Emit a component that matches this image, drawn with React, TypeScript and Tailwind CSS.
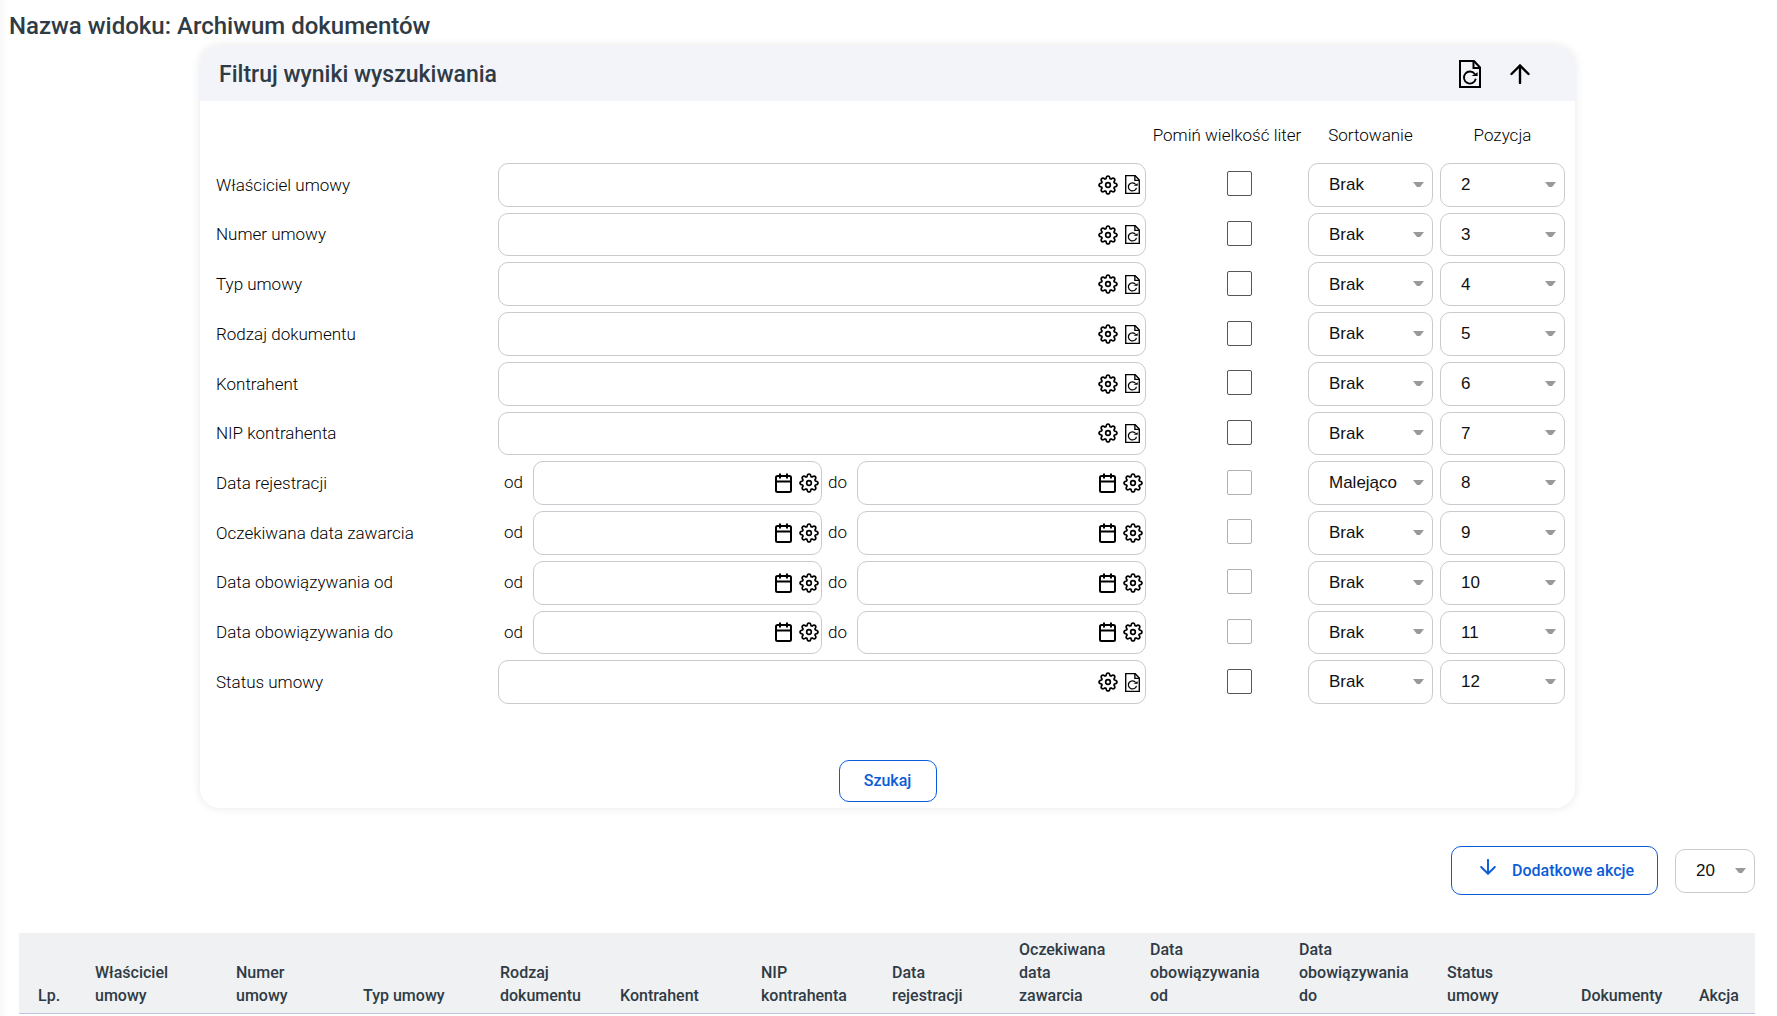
import { useState } from 'react';

interface FilterRow {
  id: string;
  label: string;
  range?: boolean;
  sort: string;
}

interface Column {
  title: string;
  width: string;
}

const SORT_OPTIONS = ['Brak', 'Rosnąco', 'Malejąco'];
const POSITIONS = ['1', '2', '3', '4', '5', '6', '7', '8', '9', '10', '11', '12'];

const FILTERS: FilterRow[] = [
  { id: 'owner', label: 'Właściciel umowy', sort: 'Brak' },
  { id: 'number', label: 'Numer umowy', sort: 'Brak' },
  { id: 'type', label: 'Typ umowy', sort: 'Brak' },
  { id: 'docKind', label: 'Rodzaj dokumentu', sort: 'Brak' },
  { id: 'contractor', label: 'Kontrahent', sort: 'Brak' },
  { id: 'nip', label: 'NIP kontrahenta', sort: 'Brak' },
  { id: 'registered', label: 'Data rejestracji', range: true, sort: 'Malejąco' },
  { id: 'expected', label: 'Oczekiwana data zawarcia', range: true, sort: 'Brak' },
  { id: 'validFrom', label: 'Data obowiązywania od', range: true, sort: 'Brak' },
  { id: 'validTo', label: 'Data obowiązywania do', range: true, sort: 'Brak' },
  { id: 'status', label: 'Status umowy', sort: 'Brak' },
];

const COLUMNS: Column[] = [
  { title: 'Lp.', width: 'w-[57px]' },
  { title: 'Właściciel umowy', width: 'w-[141px]' },
  { title: 'Numer umowy', width: 'w-[127px]' },
  { title: 'Typ umowy', width: 'w-[137px]' },
  { title: 'Rodzaj dokumentu', width: 'w-[120px]' },
  { title: 'Kontrahent', width: 'w-[141px]' },
  { title: 'NIP kontrahenta', width: 'w-[131px]' },
  { title: 'Data rejestracji', width: 'w-[127px]' },
  { title: 'Oczekiwana data zawarcia', width: 'w-[131px]' },
  { title: 'Data obowiązywania od', width: 'w-[149px]' },
  { title: 'Data obowiązywania do', width: 'w-[148px]' },
  { title: 'Status umowy', width: 'w-[134px]' },
  { title: 'Dokumenty', width: 'w-[118px]' },
  { title: 'Akcja', width: 'w-[75px]' },
];

const ROW_GRID = 'grid grid-cols-[282px_minmax(0,1fr)_162px_125px_132px]';

function GearIcon() {
  return (
    <svg viewBox="0 0 24 24" className="w-5 h-5" fill="none" stroke="currentColor" strokeWidth="2" strokeLinejoin="round">
      <path d="M9.600 4.400Q10 1.200 12 1.200T14.400 4.400L15.600 4.900Q18.200 2.900 19.600 4.400T19.100 8.400L19.600 9.600Q22.800 10 22.800 12T19.600 14.400L19.100 15.600Q21.100 18.200 19.600 19.600T15.600 19.100L14.400 19.600Q14 22.800 12 22.800T9.600 19.600L8.400 19.100Q5.800 21.100 4.400 19.600T4.900 15.600L4.400 14.400Q1.200 14 1.200 12T4.400 9.600L4.900 8.400Q2.900 5.800 4.400 4.400T8.400 4.900Z" />
      <circle cx="12" cy="12" r="2.800" />
    </svg>
  );
}

function FileResetIcon({ className }: { className: string }) {
  return (
    <svg viewBox="0 0 22 28" className={className} fill="none" stroke="currentColor" strokeWidth="2">
      <path d="M1 1H15L21 7.500V27H1Z" />
      <path d="M14.500 1V8H21" />
      <path d="M15.800 14A6 6 0 1 0 16.800 18.800" strokeWidth="1.800" />
      <path d="M12.500 15.900H18.600V12.300Z" fill="currentColor" stroke="none" />
    </svg>
  );
}

function CalendarIcon() {
  return (
    <svg viewBox="0 0 17 20" className="w-[17px] h-5" fill="none" stroke="currentColor" strokeWidth="2">
      <rect x="1" y="3" width="15" height="16" rx="1.500" />
      <path d="M1 8.500H16M5 0.500V5.500M12 0.500V5.500" />
    </svg>
  );
}

function ArrowIcon({ className }: { className: string }) {
  return (
    <svg viewBox="0 0 20 20" className={className} fill="none" stroke="currentColor" strokeWidth="2.400" strokeLinecap="round">
      <path d="M10 19V1.500M1.500 10 10 1.500 18.500 10" />
    </svg>
  );
}

interface SelectBoxProps {
  label: string;
  options: string[];
  defaultValue: string;
}

function SelectBox({ label, options, defaultValue }: SelectBoxProps) {
  return (
    <div className="relative h-full">
      <select
        aria-label={label}
        defaultValue={defaultValue}
        className="w-full h-full appearance-none rounded-[10px] border border-[#cacace] bg-white pl-5 pr-6 text-[17px] font-normal text-[#111] font-['Liberation_Sans',sans-serif]"
      >
        {options.map((option) => (
          <option key={option}>{option}</option>
        ))}
      </select>
      <svg viewBox="0 0 11 6" className="pointer-events-none absolute right-[9px] top-1/2 -mt-[3px] w-[11px] h-[6px] fill-[#999]">
        <path d="M0 0H11L7 5H4Z" />
      </svg>
    </div>
  );
}

function TextField({ id }: { id: string }) {
  return (
    <div className="flex h-full items-center rounded-[10px] border border-[#cacace] bg-white pr-[5px]">
      <input id={id} type="text" className="min-w-0 flex-1 self-stretch bg-transparent px-3 outline-none" />
      <button type="button" aria-label="Ustawienia" className="mr-[7px]">
        <GearIcon />
      </button>
      <button type="button" aria-label="Wyczyść">
        <FileResetIcon className="w-[15px] h-[19px]" />
      </button>
    </div>
  );
}

function DateField({ id, label }: { id: string; label: string }) {
  return (
    <>
      <label htmlFor={id} className="w-[35px] shrink-0 pl-[6px]">
        {label}
      </label>
      <div className="flex h-full min-w-0 flex-1 items-center rounded-[10px] border border-[#cacace] bg-white pr-[2px]">
        <input id={id} type="text" className="min-w-0 flex-1 self-stretch bg-transparent px-3 outline-none" />
        <button type="button" aria-label="Kalendarz" className="mr-[7px]">
          <CalendarIcon />
        </button>
        <button type="button" aria-label="Ustawienia">
          <GearIcon />
        </button>
      </div>
    </>
  );
}

function FilterPanel() {
  const [open, setOpen] = useState(true);

  return (
    <section className="mx-auto w-full max-w-[1375px] overflow-hidden rounded-[20px] bg-white shadow-[0_0_10px_rgba(0,0,0,0.1)]">
      <header className="flex h-[55px] items-center bg-[#f3f4f9] pl-[19px] pr-[45px]">
        <h2 className="flex-1 pt-1 text-[23px] font-medium text-[#2f3b45]">Filtruj wyniki wyszukiwania</h2>
        <button type="button" aria-label="Wyczyść filtry" className="mr-[29px]">
          <FileResetIcon className="w-[22px] h-7" />
        </button>
        <button type="button" aria-label="Zwiń" onClick={() => setOpen(!open)}>
          <ArrowIcon className="w-5 h-5" />
        </button>
      </header>

      {open && (
        <form className="pb-[6px]" onSubmit={(e) => e.preventDefault()}>
          <div className="pl-4 pr-[10px]">
            <div className={`${ROW_GRID} h-[62px] items-center pt-2 text-center`}>
              <span className="col-start-3">Pomiń wielkość liter</span>
              <span>Sortowanie</span>
              <span className="pl-[7px]">Pozycja</span>
            </div>

            <div className="grid h-[541px] auto-rows-fr gap-[6px]">
              {FILTERS.map((row, idx) => (
                <div key={row.id} className={`${ROW_GRID} items-center`}>
                  <label htmlFor={row.id} className="pt-px">{row.label}</label>
                  {row.range ? (
                    <div className="flex h-full items-center">
                      <DateField id={row.id} label="od" />
                      <DateField id={`${row.id}-to`} label="do" />
                    </div>
                  ) : (
                    <TextField id={row.id} />
                  )}
                  <div className="flex justify-center pb-[2px] pl-[25px]">
                    <input
                      type="checkbox"
                      aria-label={`Pomiń wielkość liter: ${row.label}`}
                      disabled={row.range}
                      className="size-[25px] appearance-none rounded-[2px] border border-[#555] bg-white disabled:border-[#b0b0b0]"
                    />
                  </div>
                  <SelectBox label={`Sortowanie: ${row.label}`} options={SORT_OPTIONS} defaultValue={row.sort} />
                  <div className="h-full pl-[7px]">
                    <SelectBox label={`Pozycja: ${row.label}`} options={POSITIONS} defaultValue={String(idx + 2)} />
                  </div>
                </div>
              ))}
            </div>
          </div>

          <div className="mt-14 flex justify-center">
            <button type="submit" className="h-[42px] w-[98px] rounded-[10px] border border-[#0b5cd8] text-base font-medium text-[#0b5cd8]">
              Szukaj
            </button>
          </div>
        </form>
      )}
    </section>
  );
}

export default function App() {
  return (
    <main className="min-h-screen bg-white font-[Roboto,sans-serif] text-[17px] font-[350] text-black shadow-[inset_12px_0_12px_-12px_rgba(0,0,0,0.06)]">
      <h1 className="h-[46px] pl-[9px] pt-[10px] text-2xl font-medium text-[#2f3b45]">Nazwa widoku: Archiwum dokumentów</h1>
      <div className="pr-[2px]">
        <FilterPanel />
      </div>

      <div className="mt-[38px] flex items-center justify-end pr-[22px]">
        <button
          type="button"
          className="mr-[17px] flex h-[49px] w-[207px] items-center gap-4 rounded-[10px] border border-[#0b5cd8] pl-[28px] text-base font-medium text-[#0b5cd8]"
        >
          <ArrowIcon className="mb-2 w-4 h-4 rotate-180" />
          Dodatkowe akcje
        </button>
        <div className="h-11 w-20">
          <SelectBox label="Liczba wyników" options={['10', '20', '50']} defaultValue="20" />
        </div>
      </div>

      <div className="pl-[19px] pr-[22px] pt-[38px]">
        <table className="w-full table-fixed border-collapse text-left text-base text-[#2f3b45]">
          <thead className="bg-[#f0f1f3]">
            <tr className="border-b border-[#bcc8da]">
              {COLUMNS.map((col) => (
                <th key={col.title} className={`${col.width} pl-[19px] pr-4 pt-[5px] pb-[6px] align-bottom font-medium leading-[23px]`}>
                  {col.title}
                </th>
              ))}
            </tr>
          </thead>
        </table>
      </div>
    </main>
  );
}
